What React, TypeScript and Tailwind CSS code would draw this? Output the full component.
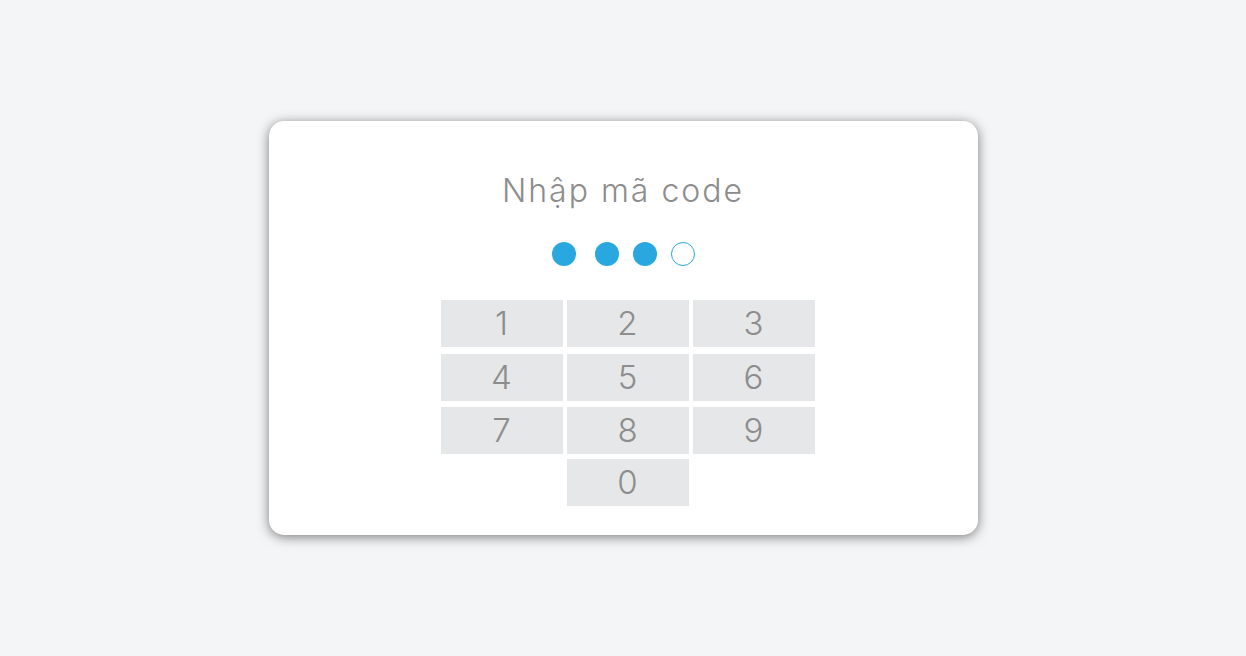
import React from "react";

const rows: (string | null)[][] = [
  ["1", "2", "3"],
  ["4", "5", "6"],
  ["7", "8", "9"],
  [null, "0", null],
];

export default function App() {
  return (
    <div
      className="w-full h-[656px] bg-[#f4f5f7] flex items-center justify-center"
      style={{ fontFamily: "Inter, 'Open Sans', sans-serif" }}
    >
      <div className="w-[709px] h-[414px] bg-white rounded-[15px] shadow-[0_2px_12px_rgba(0,0,0,0.5)] flex flex-col items-center">
        <div className="mt-[50px] h-[40px] flex items-center text-[32px] font-light text-[#8d8d8d] tracking-[2px] leading-none">
          Nhập mã code
        </div>
        <div className="mt-[31px] flex items-center">
          <span className="w-[24px] h-[24px] rounded-full bg-[#29a8e0]" />
          <span className="ml-[19px] w-[24px] h-[24px] rounded-full bg-[#29a8e0]" />
          <span className="ml-[14px] w-[24px] h-[24px] rounded-full bg-[#29a8e0]" />
          <span className="ml-[14px] w-[24px] h-[24px] rounded-full border-[1.5px] border-[#29a8e0]" />
        </div>
        <div className="mt-[34px] ml-[9px] flex flex-col">
          {rows.map((row, ri) => (
            <div
              key={ri}
              className={
                "flex gap-[4px] " +
                (ri === 1 ? "mt-[7px]" : ri === 2 ? "mt-[6px]" : ri === 3 ? "mt-[5px]" : "")
              }
            >
              {row.map((d, ci) =>
                d === null ? (
                  <div key={ci} className="w-[122px] h-[47px]" />
                ) : (
                  <div
                    key={ci}
                    className="w-[122px] h-[47px] bg-[#e6e7e8] flex items-center justify-center text-[33px] font-light text-[#8d8d8d] leading-none"
                  >
                    {d}
                  </div>
                )
              )}
            </div>
          ))}
        </div>
      </div>
    </div>
  );
}
